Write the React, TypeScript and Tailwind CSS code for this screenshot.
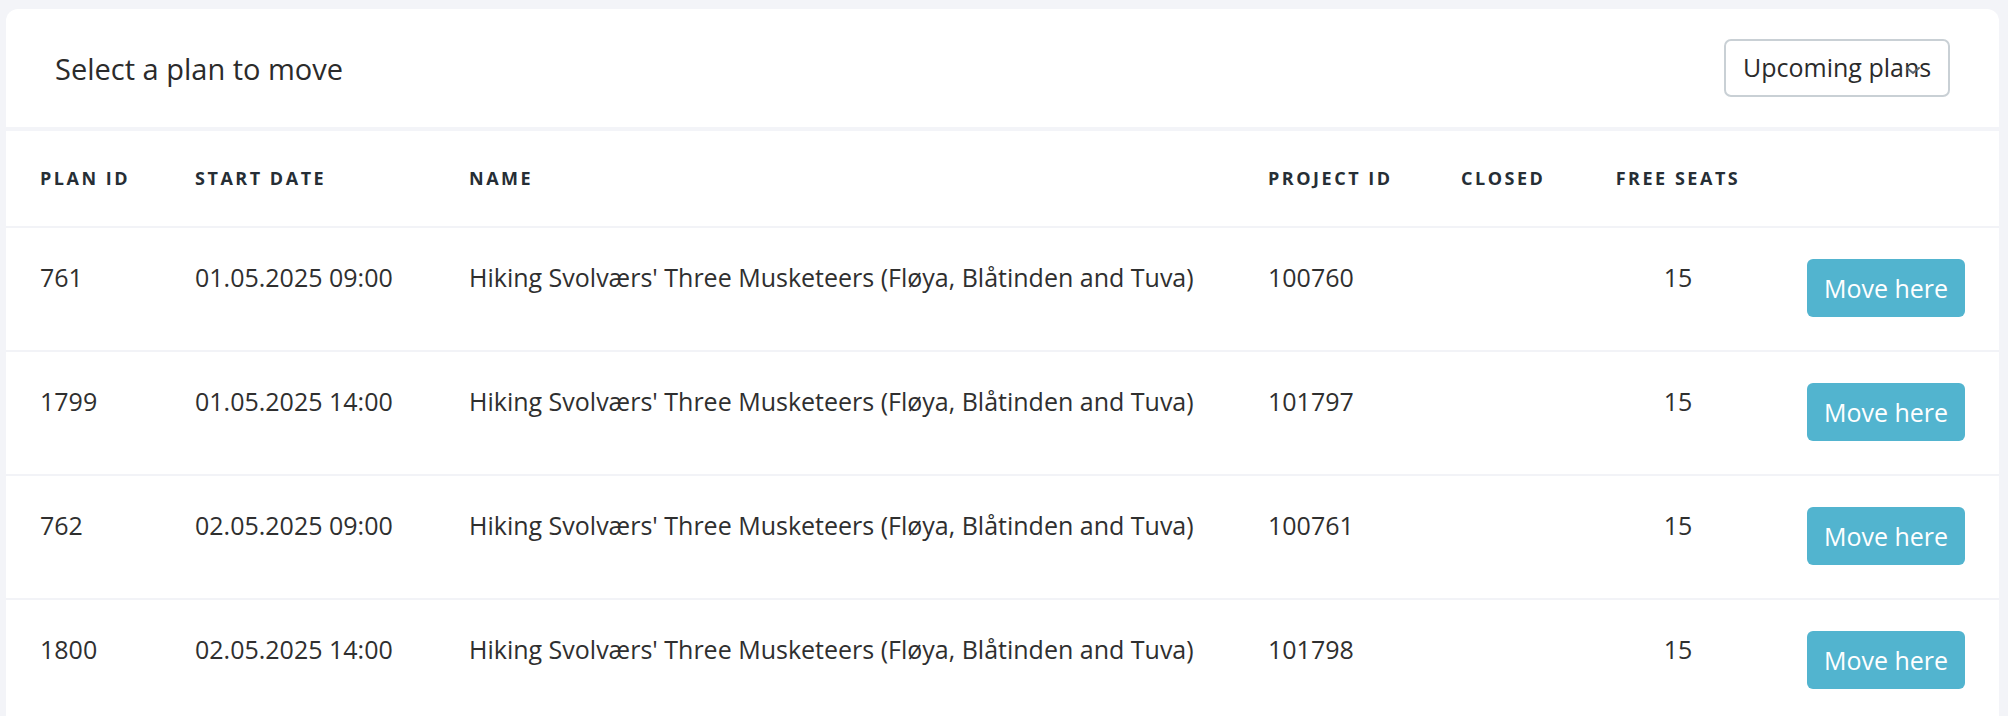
const plans = [
  { id: "761", start: "01.05.2025 09:00", project: "100760", seats: 15 },
  { id: "1799", start: "01.05.2025 14:00", project: "101797", seats: 15 },
  { id: "762", start: "02.05.2025 09:00", project: "100761", seats: 15 },
  { id: "1800", start: "02.05.2025 14:00", project: "101798", seats: 15 },
];

const NAME = "Hiking Svolværs' Three Musketeers (Fløya, Blåtinden and Tuva)";

// column template shared by header and rows
const cols = "grid grid-cols-[155px_274px_799px_193px_124px_186px_194px]";

export default function App() {
  return (
    <div className="min-h-screen bg-[#f3f4f8] pt-[9px] pl-[6px] font-['Open_Sans',sans-serif] text-[#2f2f2f]">
      <div className="w-[1993px] bg-white rounded-t-[12px]">
        {/* Card header */}
        <div className="h-[122px] flex items-center justify-between pl-[49px] pr-[49px] border-b-4 border-[#f3f4f8]">
          <h2 className="text-[29px] leading-none text-[#2b2b2b]">Select a plan to move</h2>
          <div className="relative w-[226px] h-[58px] border-2 border-[#c9d0d5] rounded-[7px] flex items-center pl-[17px] overflow-hidden">
            <span className="text-[25px] text-[#2b2b2b] whitespace-nowrap">Upcoming plans</span>
            <svg
              className="absolute right-[28px] top-[26px]"
              width="14"
              height="7"
              viewBox="0 0 14 7"
              fill="none"
            >
              <path d="M1 1l6 5 6-5" stroke="#5b6570" strokeWidth="2" strokeLinecap="round" strokeLinejoin="round" />
            </svg>
          </div>
        </div>

        {/* Table header */}
        <div className={`${cols} h-[97px] items-center px-[34px] border-b-2 border-[#f2f3f7] text-[18px] font-bold uppercase tracking-[0.14em] text-[#262e35]`}>
          <span>Plan ID</span>
          <span>Start date</span>
          <span>Name</span>
          <span>Project ID</span>
          <span>Closed</span>
          <span className="text-center">Free seats</span>
          <span />
        </div>

        {/* Rows */}
        {plans.map((p) => (
          <div
            key={p.id}
            className={`${cols} h-[124px] items-start pt-[31px] px-[34px] border-b-2 border-[#f2f3f7] text-[25px] leading-[36px]`}
          >
            <span>{p.id}</span>
            <span>{p.start}</span>
            <span className="whitespace-nowrap">{NAME}</span>
            <span>{p.project}</span>
            <span />
            <span className="text-center">{p.seats}</span>
            <div className="flex justify-end">
              <button className="w-[158px] h-[58px] rounded-[6px] bg-[#52b4cf] text-white text-[25px]">
                Move here
              </button>
            </div>
          </div>
        ))}
      </div>
    </div>
  );
}
